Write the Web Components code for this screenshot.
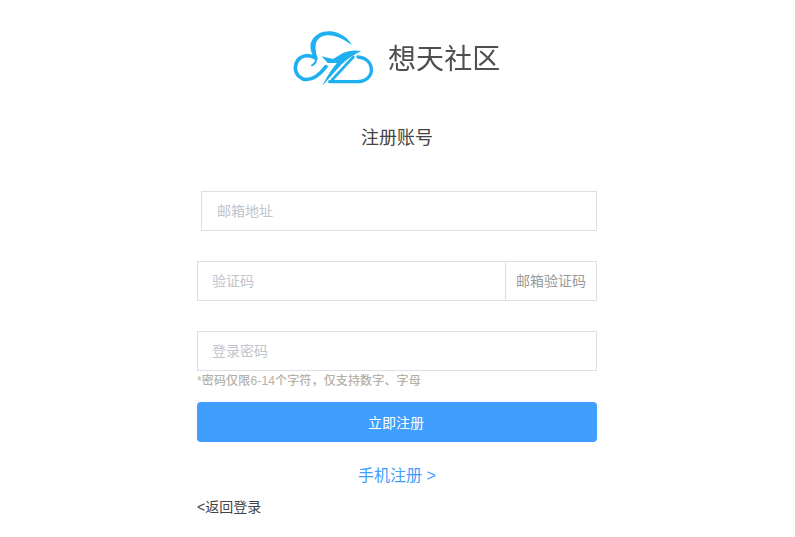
<!DOCTYPE html>
<html lang="zh"><head><meta charset="utf-8"><title>注册账号</title>
<style>
html,body{margin:0;background:#fff}
body{font-family:"Noto Sans CJK SC","Liberation Sans",sans-serif;height:537px;overflow:hidden}
</style></head><body>
<register-page></register-page>
<template id="logo-t"><style>
:host{display:flex;justify-content:center;align-items:center;gap:10px;height:64px;padding-right:7px}
svg{width:90px;height:64px;display:block;flex:none;filter:blur(.3px)}
span{font:400 28px/1 "Noto Sans CJK SC",sans-serif;color:#4f4f4f;letter-spacing:.1px;width:112px;white-space:nowrap;padding-bottom:2px;filter:blur(.4px)}
</style>
<svg viewBox="0 0 270 192" fill="none" stroke="#1fb0f2" stroke-linecap="round" stroke-linejoin="round">
<path d="M84 104C69 85 62 62 72 43C85 18 120 9 150 21C171 30 184 42 192 58C175 44 158 34 135 29C112 24 92 31 85 49C80 63 84 85 90 98Z" fill="#1fb0f2" stroke="none"/>
<path d="M82 96C62 84 41 88 29 103C17 120 20 147 43 158C70 168 92 150 114 122" stroke-width="11"/>
<path d="M84 98C85 108 80 114 72 118" stroke-width="6"/>
<path d="M101 91L135 99L165 81C180 74 200 71 220 75C196 86 176 100 161 115L103 179C118 150 133 126 147 111L119 111Z" fill="#1fb0f2" stroke="none"/>
<path d="M132 162L196 93" stroke-width="8"/>
<path d="M125 167H205C235 167 252 150 250 128C248 108 232 95 210 93" stroke-width="10"/>
</svg><span>想天社区</span></template>

<template id="field-t"><style>
:host{height:40px;box-sizing:border-box;border:1px solid #dcdfe6;background:#fff;display:flex;align-items:stretch}
.ph{flex:1;display:flex;align-items:center;padding-left:var(--pad,14px);padding-bottom:2px;font-size:14px;color:#c0c4cc}
::slotted([slot=addon]){flex:none}
</style><div class="ph"><slot name="ph"></slot></div><slot name="addon"></slot></template>

<template id="addon-t"><style>
:host{display:flex;align-items:center;justify-content:center;width:91px;box-sizing:border-box;border-left:1px solid #dcdfe6;padding-bottom:2px;font-size:14px;color:#999}
</style><slot></slot></template>

<template id="page-t"><style>
:host{display:block;padding-top:26px;font-family:"Noto Sans CJK SC","Liberation Sans",sans-serif}
.wrap{width:400px;margin:0 auto 0 197px;display:flex;flex-direction:column}
h1{margin:0;font-weight:400;font-size:18px;line-height:24px;height:25px;color:#444;text-align:center;padding-top:34px}
.first{margin-top:42px;margin-left:4px;--pad:15px}
.gap{margin-top:30px}
.hint{font:500 12px/17px "Liberation Sans","Noto Sans CJK SC",sans-serif;color:#b5b0a8;height:17px;margin-top:2px;margin-bottom:1px;white-space:nowrap;letter-spacing:.15px}
button{all:unset;box-sizing:border-box;height:40px;margin-top:11px;background:#409eff;color:#fff;border-radius:4px;font-size:14px;text-align:center;line-height:36px;padding-right:2px}
.alt{margin-top:24px;height:21px;text-align:center;font:16px/20px "Liberation Sans","Noto Sans CJK SC",sans-serif;color:#409eff}
.back{margin-top:10px;font:14px/20px "Liberation Sans","Noto Sans CJK SC",sans-serif;color:#444}
</style>
<site-logo></site-logo>
<div class="wrap">
<h1>注册账号</h1>
<form-field class="first"><span slot="ph">邮箱地址</span></form-field>
<form-field class="gap"><span slot="ph">验证码</span><field-addon slot="addon">邮箱验证码</field-addon></form-field>
<form-field class="gap"><span slot="ph">登录密码</span></form-field>
<div class="hint">*密码仅限6-14个字符，仅支持数字、字母</div>
<button type="button">立即注册</button>
<div class="alt">手机注册 &gt;</div>
<div class="back">&lt;返回登录</div>
</div></template>
<script>
function def(tag,tid){customElements.define(tag,class extends HTMLElement{constructor(){super();this.attachShadow({mode:"open"}).appendChild(document.getElementById(tid).content.cloneNode(true));}});}
def("site-logo","logo-t");def("form-field","field-t");def("field-addon","addon-t");def("register-page","page-t");
</script>
</body></html>
